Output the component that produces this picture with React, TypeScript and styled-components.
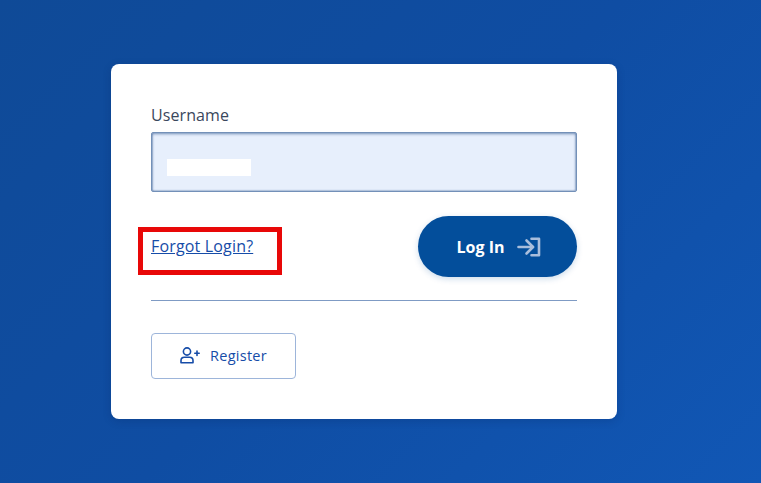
import styled, { createGlobalStyle } from "styled-components";

const GlobalStyle = createGlobalStyle`
  html, body { margin: 0; padding: 0; height: 100%; }
  body { font-family: "Open Sans", "Noto Sans", sans-serif; }
`;

const Page = styled.div`
  width: 761px;
  height: 483px;
  overflow: hidden;
  box-sizing: border-box;
  padding: 64px 0 0 111px;
  background: linear-gradient(135deg, #0f4a97 0%, #0f4da3 50%, #1157b5 100%);
`;

const Card = styled.div`
  width: 506px;
  height: 355px;
  box-sizing: border-box;
  padding: 40px;
  background: #fff;
  border-radius: 8px;
  box-shadow: 0 2px 8px rgba(0, 30, 80, 0.2);
`;

const Label = styled.label`
  display: block;
  height: 28px;
  font-size: 16px;
  font-weight: 500;
  letter-spacing: 0.1px;
  line-height: 22px;
  color: #3a475c;
`;

const Field = styled.div`
  width: 426px;
  height: 60px;
  box-sizing: border-box;
  padding: 26px 0 0 15px;
  background: #e7effc;
  border: 1px solid #7390b8;
  border-radius: 2px;
  box-shadow: inset 0 1px 3px rgba(40, 80, 140, 0.6), inset 1px 0 1px rgba(40, 80, 140, 0.25), inset -1px -1px 1px rgba(40, 80, 140, 0.2);
`;

const Masked = styled.div`
  width: 84px;
  height: 17px;
  background: #fff;
`;

const ActionRow = styled.div`
  display: flex;
  justify-content: space-between;
  align-items: flex-start;
  margin-top: 24px;
`;

const ForgotWrap = styled.div`
  position: relative;
  margin-top: 17px;
`;

const ForgotLink = styled.a`
  font-size: 16px;
  font-weight: 500;
  letter-spacing: 0.17px;
  line-height: 26px;
  color: #164ca8;
  text-decoration: underline;
`;

const Highlight = styled.div`
  position: absolute;
  left: -13px;
  top: -6px;
  width: 144px;
  height: 48px;
  box-sizing: border-box;
  border: 5px solid #e80808;
`;

const LoginButton = styled.button`
  display: flex;
  align-items: center;
  justify-content: center;
  gap: 13px;
  width: 159px;
  height: 61px;
  padding: 0 0 0 3px;
  border: 0;
  border-radius: 31px;
  background: #034e9b;
  color: #fff;
  font-family: inherit;
  font-size: 16px;
  font-weight: 700;
  box-shadow: 0 2px 6px rgba(3, 78, 155, 0.2);
`;

const Divider = styled.hr`
  margin: 23px 0 32px;
  border: 0;
  height: 1px;
  background: #7f9bc4;
`;

const RegisterButton = styled.button`
  display: flex;
  align-items: center;
  justify-content: center;
  gap: 10px;
  width: 145px;
  height: 46px;
  padding: 0 0 2px 0;
  background: #fff;
  border: 1px solid #9db5da;
  border-radius: 4px;
  color: #164ca8;
  font-family: inherit;
  font-size: 14.5px;
  font-weight: 500;
  letter-spacing: 0.25px;
`;

const EnterIcon = () => (
  <svg width="24" height="20" viewBox="0 0 24 20" fill="none" stroke="#a9bedc" strokeWidth="2.6" strokeLinecap="round" strokeLinejoin="round">
    <path d="M1.5 10h14.5" />
    <path d="M9.5 3.5 16 10 9.5 16.5" />
    <path d="M14.5 1.8h7.5v16.4h-7.5" />
  </svg>
);

const UserPlusIcon = () => (
  <svg width="20" height="17" viewBox="0 0 20 17" fill="none" stroke="#164ca8" strokeWidth="1.6" strokeLinecap="round" strokeLinejoin="round">
    <circle cx="7" cy="4.5" r="3.6" />
    <path d="M1 15.8v-2.2c0-2 1.5-3.3 3.4-3.3h5.2c1.9 0 3.4 1.3 3.4 3.3v2.2z" />
    <path d="M17 4v4.5M14.8 6.2h4.4" />
  </svg>
);

export default function App() {
  return (
    <>
      <GlobalStyle />
      <Page>
        <Card>
          <Label>Username</Label>
          <Field>
            <Masked />
          </Field>
          <ActionRow>
            <ForgotWrap>
              <ForgotLink href="#">Forgot Login?</ForgotLink>
              <Highlight />
            </ForgotWrap>
            <LoginButton>
              Log In
              <EnterIcon />
            </LoginButton>
          </ActionRow>
          <Divider />
          <RegisterButton>
            <UserPlusIcon />
            Register
          </RegisterButton>
        </Card>
      </Page>
    </>
  );
}
